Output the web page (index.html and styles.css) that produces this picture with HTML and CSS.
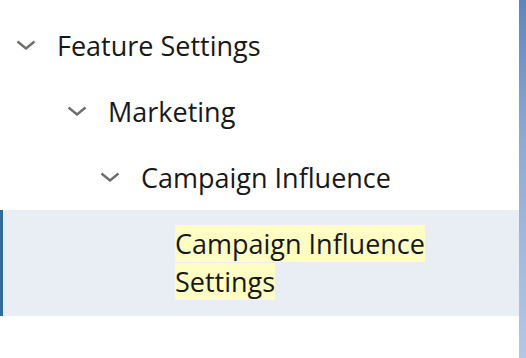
FILE: index.html
```html
<!DOCTYPE html>
<html lang="en">
<head>
    <meta charset="UTF-8">
    <title>Setup Tree</title>
    <link rel="stylesheet" href="styles.css">
</head>
<body>
    <div class="page">
        <ul class="tree">
            <li class="node lv1">
                <svg class="chev" width="20" height="10" viewBox="0 0 20 10"><path d="M1.5 1.5 L10 8.5 L18.5 1.5" /></svg>
                <span class="label">Feature Settings</span>
            </li>
            <li class="node lv2">
                <svg class="chev" width="20" height="10" viewBox="0 0 20 10"><path d="M1.5 1.5 L10 8.5 L18.5 1.5" /></svg>
                <span class="label">Marketing</span>
            </li>
            <li class="node lv3">
                <svg class="chev" width="20" height="10" viewBox="0 0 20 10"><path d="M1.5 1.5 L10 8.5 L18.5 1.5" /></svg>
                <span class="label">Campaign Influence</span>
            </li>
            <li class="node lv4 on">
                <span class="label"><mark>Campaign Influence Settings</mark></span>
            </li>
        </ul>
        <div class="strip"></div>
    </div>
</body>
</html>
```

FILE: styles.css
```css
*{margin:0;padding:0;}
li{list-style: none;}
body {
    background: #fff;
    font-family: "Open Sans", "Liberation Sans", sans-serif;
    color: #181818;
}
.page {
    display: flex;
    height: 358px;
}
.tree {
    flex: 1;
    padding-top: 12px;
}
.node {
    display: flex;
    align-items: center;
    gap: 21px;
    height: 66px;
    font-size: 27px;
}
.lv1 { padding-left: 16px; }
.lv2 { padding-left: 67px; }
.lv3 { padding-left: 100px; }
.lv4 {
    padding-left: 175px;
    padding-right: 60px;
}
.chev {
    flex: none;
    fill: none;
    stroke: #706e6b;
    stroke-width: 2.4;
}
.node.on {
    height: auto;
    padding-top: 15px;
    padding-bottom: 15px;
    line-height: 38px;
    background: #e8eef3;
    border-left: 3px solid #2f6b9c;
    padding-left: 172px;
}
.node.on mark {
    background: #fdfdc4;
    color: #181818;
}
.strip {
    width: 7px;
    background: linear-gradient(#5f86b9, #8fabd3 40%, #b4c8e4);
}
```
